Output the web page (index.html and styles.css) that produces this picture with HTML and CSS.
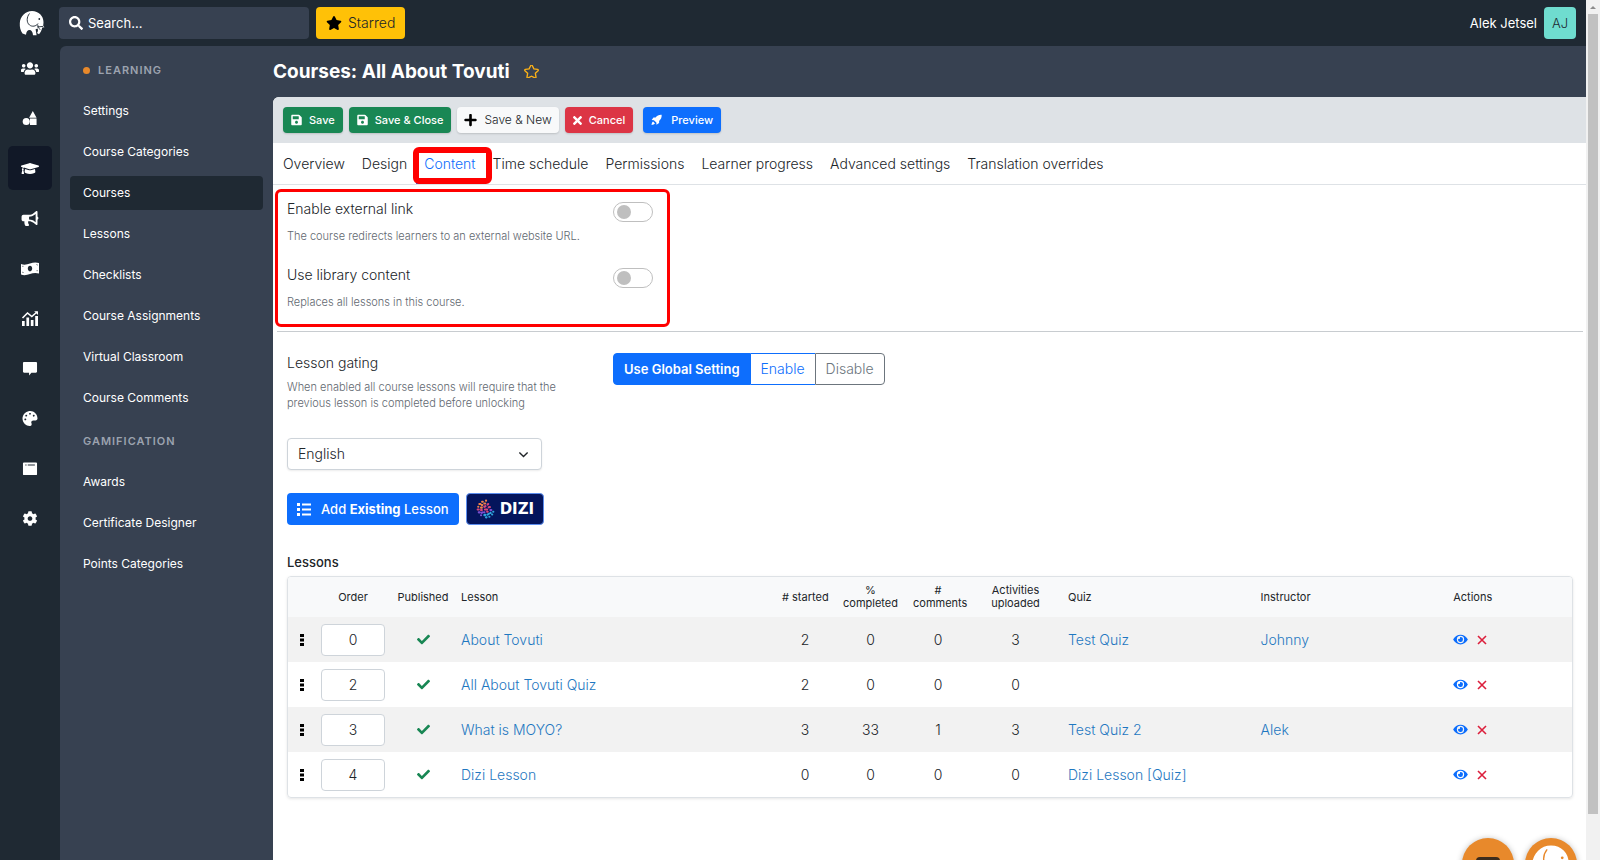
FILE: index.html
```html
<!DOCTYPE html>
<html lang="en">
<head>
  <meta charset="UTF-8" />
  <meta name="viewport" content="width=device-width, initial-scale=1.0"/>
  <title>Courses: All About Tovuti</title>
  <link rel="stylesheet" href="styles.css">
</head>
<body>
  <!-- Icon sprite -->
  <svg class="sprite" aria-hidden="true">
    <symbol id="star" viewBox="0 0 576 512"><path d="M259.3 17.8L194 150.2 47.9 171.5c-26.2 3.8-36.7 36.1-17.7 54.6l105.7 103-25 145.5c-4.5 26.3 23.2 46 46.4 33.7L288 439.6l130.7 68.7c23.2 12.2 50.9-7.4 46.4-33.7l-25-145.5 105.7-103c19-18.5 8.5-50.8-17.7-54.6L382 150.2 316.7 17.8c-11.7-23.6-45.6-23.9-57.4 0z"/></symbol>
    <symbol id="search" viewBox="0 0 512 512"><path d="M505 442.7L405.3 343c-4.5-4.5-10.6-7-17-7H372c27.6-35.3 44-79.7 44-128C416 93.1 322.9 0 208 0S0 93.1 0 208s93.1 208 208 208c48.3 0 92.7-16.4 128-44v16.3c0 6.4 2.5 12.5 7 17l99.7 99.7c9.4 9.4 24.6 9.4 33.9 0l28.3-28.3c9.4-9.4 9.4-24.6.1-34zM208 336c-70.7 0-128-57.2-128-128 0-70.7 57.2-128 128-128 70.7 0 128 57.2 128 128 0 70.7-57.2 128-128 128z"/></symbol>
    <symbol id="save" viewBox="0 0 448 512"><path d="M433.941 129.941l-83.882-83.882A48 48 0 0 0 316.118 32H48C21.49 32 0 53.49 0 80v352c0 26.51 21.49 48 48 48h352c26.51 0 48-21.49 48-48V163.882a48 48 0 0 0-14.059-33.941zM224 416c-35.346 0-64-28.654-64-64 0-35.346 28.654-64 64-64s64 28.654 64 64c0 35.346-28.654 64-64 64zm96-304.52V212c0 6.627-5.373 12-12 12H76c-6.627 0-12-5.373-12-12V108c0-6.627 5.373-12 12-12h228.52c3.183 0 6.235 1.264 8.485 3.515l3.48 3.48A11.996 11.996 0 0 1 320 111.48z"/></symbol>
    <symbol id="plus" viewBox="0 0 448 512"><path d="M416 208H272V64c0-17.67-14.33-32-32-32h-32c-17.67 0-32 14.33-32 32v144H32c-17.67 0-32 14.33-32 32v32c0 17.67 14.33 32 32 32h144v144c0 17.67 14.33 32 32 32h32c17.67 0 32-14.33 32-32V304h144c17.67 0 32-14.33 32-32v-32c0-17.67-14.33-32-32-32z"/></symbol>
    <symbol id="times" viewBox="0 0 352 512"><path d="M242.72 256l100.07-100.07c12.28-12.28 12.28-32.19 0-44.48l-22.24-22.24c-12.28-12.28-32.19-12.28-44.48 0L176 189.28 75.93 89.21c-12.28-12.28-32.19-12.28-44.48 0L9.21 111.45c-12.28 12.28-12.28 32.19 0 44.48L109.28 256 9.21 356.07c-12.28 12.28-12.28 32.19 0 44.48l22.24 22.24c12.28 12.28 32.2 12.28 44.48 0L176 322.72l100.07 100.07c12.28 12.28 32.2 12.28 44.48 0l22.24-22.24c12.28-12.28 12.28-32.19 0-44.48L242.72 256z"/></symbol>
    <symbol id="rocket" viewBox="0 0 16 16"><path d="M15.500.5C11.800.2 9 1.400 6.700 4.200H3.600L1 8l3.200.2 3.600 3.600.2 3.200 3.800-2.600V9.300C14.600 7 15.800 4.200 15.500.5zM3 10.200C1.600 11.200 1 13 .8 15.200 3 15 4.800 14.400 5.800 13z"/></symbol>
    <symbol id="check" viewBox="0 0 512 512"><path d="M173.898 439.404l-166.4-166.4c-9.997-9.997-9.997-26.206 0-36.204l36.203-36.204c9.997-9.998 26.207-9.998 36.204 0L192 312.69 432.095 72.596c9.997-9.997 26.207-9.997 36.204 0l36.203 36.204c9.997 9.997 9.997 26.206 0 36.204l-294.4 294.401c-9.998 9.997-26.207 9.997-36.204-.001z"/></symbol>
    <symbol id="eye" viewBox="0 0 576 512"><path d="M572.52 241.4C518.29 135.59 410.93 64 288 64S57.68 135.64 3.48 241.41a32.35 32.35 0 0 0 0 29.19C57.71 376.41 165.07 448 288 448s230.32-71.64 284.52-177.41a32.35 32.35 0 0 0 0-29.19zM288 400a144 144 0 1 1 144-144 143.93 143.93 0 0 1-144 144zm0-240a95.31 95.31 0 0 0-25.31 3.79 47.85 47.85 0 0 1-66.9 66.9A95.78 95.78 0 1 0 288 160z"/></symbol>
    <symbol id="cross" viewBox="0 0 10 10"><path d="M1 1l8 8M9 1L1 9" fill="none" stroke="currentColor" stroke-width="1.600"/></symbol>
    <symbol id="dots" viewBox="0 0 4 12"><path d="M0 0h4v3H0zM0 4.500h4v3H0zM0 9h4v3H0z"/></symbol>
    <symbol id="list" viewBox="0 0 15 13"><path d="M0 0h3v3H0zM0 5h3v3H0zM0 10h3v3H0zM5 .5h9v2H5zM5 5.500h9v2H5zM5 10.500h9v2H5z"/></symbol>
    <symbol id="users" viewBox="0 0 640 512"><path d="M96 224c35.3 0 64-28.7 64-64s-28.7-64-64-64-64 28.7-64 64 28.7 64 64 64zm448 0c35.3 0 64-28.7 64-64s-28.7-64-64-64-64 28.7-64 64 28.7 64 64 64zm32 32h-64c-17.6 0-33.5 7.1-45.1 18.6 40.3 22.1 68.9 62 75.1 109.4h66c17.7 0 32-14.3 32-32v-32c0-35.3-28.7-64-64-64zm-256 0c61.9 0 112-50.1 112-112S381.9 32 320 32 208 82.1 208 144s50.1 112 112 112zm76.8 32h-8.3c-20.8 10-43.9 16-68.5 16s-47.6-6-68.5-16h-8.3C179.6 288 128 339.6 128 403.2V432c0 26.5 21.5 48 48 48h288c26.5 0 48-21.5 48-48v-28.8c0-63.6-51.6-115.2-115.2-115.2zm-223.7-13.4C161.5 263.1 145.6 256 128 256H64c-35.3 0-64 28.7-64 64v32c0 17.7 14.3 32 32 32h65.9c6.3-47.4 34.9-87.3 75.2-109.4z"/></symbol>
    <symbol id="shapes" viewBox="0 0 16 16"><path d="M11 0L15 7.300H7zM8 8h7v7H8z"/><circle cx="4" cy="11.200" r="3.800"/></symbol>
    <symbol id="cap" viewBox="0 0 640 512"><path d="M622.34 153.2L343.4 67.5c-15.2-4.67-31.6-4.67-46.79 0L17.66 153.2c-23.54 7.23-23.54 38.36 0 45.59l48.63 14.94c-10.67 13.19-17.23 29.28-17.88 46.9C38.78 266.15 32 276.11 32 288c0 10.78 5.68 19.85 13.86 25.65L20.33 428.53C18.11 438.52 25.71 448 35.94 448h56.11c10.24 0 17.84-9.48 15.62-19.47L82.14 313.65C90.32 307.85 96 298.78 96 288c0-11.57-6.47-21.25-15.66-26.87.76-15.02 8.44-28.3 20.69-36.72L296.6 284.5c9.06 2.78 26.44 6.25 46.79 0l278.95-85.7c23.55-7.24 23.55-38.36 0-45.6zM352.79 315.09c-28.53 8.76-52.84 3.92-65.59 0l-145.02-44.55L128 384c0 35.35 85.96 64 192 64s192-28.65 192-64l-14.18-113.47-145.03 44.56z"/></symbol>
    <symbol id="horn" viewBox="0 0 576 512"><path d="M576 240c0-23.63-12.95-44.04-32-55.12V32.01C544 23.26 537.02 0 512 0c-7.12 0-14.19 2.38-19.98 7.02l-85.03 68.03C364.28 109.19 310.66 128 256 128H64c-35.35 0-64 28.65-64 64v96c0 35.35 28.65 64 64 64h33.7c-1.39 10.48-2.18 21.14-2.18 32 0 39.77 9.26 77.35 25.56 110.94 5.19 10.69 16.52 17.06 28.4 17.06h74.28c26.05 0 41.69-29.84 25.9-50.56-16.4-21.52-26.15-48.36-26.15-77.44 0-11.11 1.62-21.79 4.41-32H256c54.66 0 108.28 18.81 150.98 52.95l85.03 68.03a32.023 32.023 0 0 0 19.98 7.02c24.92 0 32-22.78 32-32V295.13C563.05 284.04 576 263.63 576 240zm-96 141.42l-33.05-26.44C392.95 311.78 325.12 288 256 288v-96c69.12 0 136.95-23.78 190.95-66.98L480 98.58v282.84z"/></symbol>
    <symbol id="cash" viewBox="0 0 18 14"><path fill-rule="evenodd" d="M0 2.500c3 1.200 6 .6 9-.5s6-1.600 9-.4v10.500c-3-1.200-6-.7-9 .4s-6 1.700-9 .5zM9 4.200c-1.300 0-2.200 1.300-2.200 2.900S7.700 9.900 9 9.900s2.200-1.200 2.200-2.800S10.300 4.200 9 4.200zM1.500 4.300v1.200l1.300-1zM1.500 11.300l1.400.1-1.400-1.500zM16.500 3l-1.400-.2 1.400 1.500zM16.500 9.800v-1.200l-1.300 1z"/></symbol>
    <symbol id="chart" viewBox="0 0 16 15"><path d="M0 10h2.700v5H0zM4.400 6.500h2.700V15H4.400zM8.800 9h2.700v6H8.800zM13.200 5H16v10h-2.800z"/><path d="M.5 7L5.500 2l4.300 3.500L15 1" fill="none" stroke="currentColor" stroke-width="1.600"/><path d="M12.200.2H16V4z"/></symbol>
    <symbol id="comment" viewBox="0 0 16 16"><path d="M1.700 1h12.600c.7 0 1.200.5 1.200 1.200v9c0 .7-.5 1.200-1.200 1.200H9.500L7 15.500v-3.100H1.700C1 12.400.5 11.900.5 11.200v-9C.5 1.500 1 1 1.700 1z"/></symbol>
    <symbol id="palette" viewBox="0 0 512 512"><path d="M204.3 5C104.9 24.4 24.8 104.3 5.2 203.4c-37 187 131.7 326.4 258.8 306.7 41.2-6.4 61.4-54.6 42.5-91.7-23.1-45.4 9.9-98.4 60.9-98.4h79.7c35.8 0 64.8-29.6 64.9-65.3C511.5 97.1 368.1-26.9 204.3 5zM96 320c-17.7 0-32-14.3-32-32s14.3-32 32-32 32 14.3 32 32-14.3 32-32 32zm32-128c-17.7 0-32-14.3-32-32s14.3-32 32-32 32 14.3 32 32-14.3 32-32 32zm128-64c-17.7 0-32-14.3-32-32s14.3-32 32-32 32 14.3 32 32-14.3 32-32 32zm128 64c-17.7 0-32-14.3-32-32s14.3-32 32-32 32 14.3 32 32-14.3 32-32 32z"/></symbol>
    <symbol id="window" viewBox="0 0 16 16"><path fill-rule="evenodd" d="M1.500 1.500h13c.6 0 1 .4 1 1v11.500c0 .6-.4 1-1 1h-13c-.6 0-1-.4-1-1V2.500c0-.6.4-1 1-1zM3 3.600v1.300h1.300V3.600zM5.600 3.600v1.300h7.600V3.600z"/></symbol>
    <symbol id="gear" viewBox="0 0 512 512"><path d="M487.4 315.7l-42.6-24.6c4.3-23.2 4.3-47 0-70.2l42.6-24.6c4.9-2.8 7.1-8.6 5.5-14-11.1-35.6-30-67.8-54.7-94.6-3.8-4.1-10-5.1-14.8-2.3L380.8 110c-17.9-15.4-38.5-27.3-60.8-35.1V25.8c0-5.6-3.9-10.5-9.4-11.7-36.7-8.2-74.3-7.8-109.2 0-5.500 1.200-9.400 6.100-9.400 11.700V75c-22.2 7.9-42.8 19.8-60.8 35.1L88.7 85.500c-4.900-2.800-11-1.900-14.800 2.300-24.700 26.700-43.600 58.900-54.700 94.600-1.700 5.400.6 11.200 5.500 14L67.3 221c-4.3 23.2-4.3 47 0 70.2l-42.6 24.600c-4.900 2.800-7.100 8.600-5.500 14 11.100 35.600 30 67.800 54.700 94.600 3.800 4.100 10 5.100 14.800 2.300l42.600-24.600c17.9 15.400 38.500 27.300 60.800 35.100v49.200c0 5.600 3.900 10.500 9.400 11.700 36.700 8.200 74.300 7.800 109.200 0 5.500-1.200 9.400-6.100 9.400-11.700v-49.200c22.200-7.900 42.800-19.800 60.800-35.100l42.600 24.600c4.900 2.800 11 1.900 14.800-2.300 24.700-26.700 43.600-58.900 54.700-94.600 1.500-5.500-.7-11.300-5.600-14.100zM256 336c-44.1 0-80-35.9-80-80s35.9-80 80-80 80 35.9 80 80-35.9 80-80 80z"/></symbol>
    <symbol id="elephant" viewBox="0 0 26 26"><path fill="#fff" d="M3.500 23.500C1.500 20.500.5 17 .8 13 1.300 6 6.500 1 13 1c6.700 0 11.500 5 11.500 11.200 0 1.600-.3 2.800-.3 3.800l1.300 1.300-2.200.3c-.6 3-2 5.200-3.300 6.600l-2-1.200c1-1.500 1.300-3 .6-4.500l-2 .8 1 6H14c-.2-3.300-1.500-5.300-3.500-5.300S7.300 21.500 7 24.800z"/><path fill="none" stroke="currentColor" stroke-width=".9" d="M10.500 3.500C7.600 7 7.300 12.500 10.500 15c2.600 2 6.500 1.500 8.500-1.500M18.600 14.500c.5 2 1 3.500 2.600 5.300M18 17l6-.6"/><circle cx="20.300" cy="9" r=".9" fill="currentColor"/></symbol>
  </svg>

  <!-- Top bar -->
  <header class="topbar">
    <a class="logo" href="#" aria-label="Home"><svg><use href="#elephant"/></svg></a>
    <div class="search">
      <svg><use href="#search"/></svg>
      <input type="text" placeholder="Search..." aria-label="Search">
    </div>
    <button class="starred"><svg><use href="#star"/></svg>Starred</button>
    <div class="user">
      <span>Alek Jetsel</span>
      <div class="avatar">AJ</div>
    </div>
  </header>

  <div class="shell">
    <!-- Icon rail -->
    <nav class="rail" aria-label="Sections">
      <a href="#" aria-label="Users"><svg><use href="#users"/></svg></a>
      <a href="#" aria-label="Content"><svg><use href="#shapes"/></svg></a>
      <a href="#" aria-label="Learning" class="active"><svg><use href="#cap"/></svg></a>
      <a href="#" aria-label="Marketing"><svg><use href="#horn"/></svg></a>
      <a href="#" aria-label="Commerce"><svg><use href="#cash"/></svg></a>
      <a href="#" aria-label="Reports"><svg><use href="#chart"/></svg></a>
      <a href="#" aria-label="Messages"><svg><use href="#comment"/></svg></a>
      <a href="#" aria-label="Design"><svg><use href="#palette"/></svg></a>
      <a href="#" aria-label="Pages"><svg><use href="#window"/></svg></a>
      <a href="#" aria-label="Configuration"><svg><use href="#gear"/></svg></a>
    </nav>

    <!-- Side menu -->
    <nav class="menu" aria-label="Learning">
      <div class="menu-title dot">LEARNING</div>
      <a href="#">Settings</a>
      <a href="#">Course Categories</a>
      <a href="#" class="active">Courses</a>
      <a href="#">Lessons</a>
      <a href="#">Checklists</a>
      <a href="#">Course Assignments</a>
      <a href="#">Virtual Classroom</a>
      <a href="#">Course Comments</a>
      <div class="menu-title">GAMIFICATION</div>
      <a href="#">Awards</a>
      <a href="#">Certificate Designer</a>
      <a href="#">Points Categories</a>
    </nav>

    <!-- Page -->
    <main class="page">
      <h1 class="page-title">Courses: All About Tovuti <svg><use href="#star"/></svg></h1>

      <div class="card">
        <div class="toolbar">
          <button class="btn btn-success"><svg><use href="#save"/></svg>Save</button>
          <button class="btn btn-success"><svg><use href="#save"/></svg>Save &amp; Close</button>
          <button class="btn btn-light"><svg><use href="#plus"/></svg>Save &amp; New</button>
          <button class="btn btn-danger"><svg><use href="#times"/></svg>Cancel</button>
          <button class="btn btn-primary"><svg><use href="#rocket"/></svg>Preview</button>
        </div>

        <nav class="tabs" aria-label="Course">
          <a href="#">Overview</a>
          <a href="#">Design</a>
          <a href="#" class="active">Content<span class="tab-mark"></span></a>
          <a href="#">Time schedule</a>
          <a href="#">Permissions</a>
          <a href="#">Learner progress</a>
          <a href="#">Advanced settings</a>
          <a href="#">Translation overrides</a>
        </nav>

        <section class="options">
          <div class="option">
            <div>
              <label for="external">Enable external link</label>
              <p>The course redirects learners to an external website URL.</p>
            </div>
            <input class="switch" type="checkbox" id="external">
          </div>
          <div class="option">
            <div>
              <label for="library">Use library content</label>
              <p>Replaces all lessons in this course.</p>
            </div>
            <input class="switch" type="checkbox" id="library">
          </div>
        </section>

        <section class="content">
          <div class="gating">
            <div class="gating-text">
              <h2>Lesson gating</h2>
              <p>When enabled all course lessons will require that the previous lesson is completed before unlocking</p>
            </div>
            <div class="btn-group">
              <button class="on">Use Global Setting</button>
              <button class="enable">Enable</button>
              <button class="disable">Disable</button>
            </div>
          </div>

          <select class="language" aria-label="Language">
            <option>English</option>
          </select>

          <div class="lesson-actions">
            <button class="add"><svg><use href="#list"/></svg><span>Add <b>Existing</b> Lesson</span></button>
            <button class="dizi">
              <svg viewBox="0 0 18 18" fill="none" stroke-linecap="round" stroke-width="1.900">
                <path stroke="#f0824a" d="M2 7h.1M3 4.500h1M5.500 2.500h.6M5.200 5.500h.5M7.500 4h.8M9 1.500h.1M4.500 7.800h.8"/>
                <path stroke="#d8467c" d="M7.500 7l1-.5M8 9.500h2M1.500 9.500h1M10.500 5l.5-.5M4.500 10h.8M11.500 7.500l1-.3M10 11.500h.5"/>
                <path stroke="#7a4fd0" d="M2.500 12h.8M5 12.500l1-.4M13 10h.8M7.500 12h.1M4.500 14.600h.1"/>
                <path stroke="#2fa4dc" d="M7.500 14.500l1-.2M10.500 14l1-.6M13 12.500h.1M9 16.500h.5M12 16h.1M14.500 14h.1M15.500 11.500h.1"/>
              </svg>
              DIZI
            </button>
          </div>

          <h2 class="lessons-title" id="lessons-title">Lessons</h2>
          <div class="table-box">
            <table aria-labelledby="lessons-title">
              <thead>
                <tr>
                  <th class="col-handle"></th>
                  <th class="col-order">Order</th>
                  <th class="col-pub">Published</th>
                  <th class="col-lesson">Lesson</th>
                  <th class="col-started"># started</th>
                  <th class="col-done">%<br>completed</th>
                  <th class="col-comments">#<br>comments</th>
                  <th class="col-act">Activities<br>uploaded</th>
                  <th class="col-link">Quiz</th>
                  <th class="col-link">Instructor</th>
                  <th class="col-actions">Actions</th>
                </tr>
              </thead>
              <tbody>
                <tr>
                  <td><svg class="i-dots"><use href="#dots"/></svg></td>
                  <td><input type="text" value="0" aria-label="Order"></td>
                  <td><svg class="i-check"><use href="#check"/></svg></td>
                  <td class="left"><a href="#">About Tovuti</a></td>
                  <td>2</td><td>0</td><td>0</td><td>3</td>
                  <td class="left"><a href="#">Test Quiz</a></td>
                  <td class="left"><a href="#">Johnny</a></td>
                  <td class="left"><div class="row-actions"><button aria-label="View"><svg class="i-eye"><use href="#eye"/></svg></button><button aria-label="Remove"><svg class="i-cross"><use href="#cross"/></svg></button></div></td>
                </tr>
                <tr>
                  <td><svg class="i-dots"><use href="#dots"/></svg></td>
                  <td><input type="text" value="2" aria-label="Order"></td>
                  <td><svg class="i-check"><use href="#check"/></svg></td>
                  <td class="left"><a href="#">All About Tovuti Quiz</a></td>
                  <td>2</td><td>0</td><td>0</td><td>0</td>
                  <td class="left"></td>
                  <td class="left"></td>
                  <td class="left"><div class="row-actions"><button aria-label="View"><svg class="i-eye"><use href="#eye"/></svg></button><button aria-label="Remove"><svg class="i-cross"><use href="#cross"/></svg></button></div></td>
                </tr>
                <tr>
                  <td><svg class="i-dots"><use href="#dots"/></svg></td>
                  <td><input type="text" value="3" aria-label="Order"></td>
                  <td><svg class="i-check"><use href="#check"/></svg></td>
                  <td class="left"><a href="#">What is MOYO?</a></td>
                  <td>3</td><td>33</td><td>1</td><td>3</td>
                  <td class="left"><a href="#">Test Quiz 2</a></td>
                  <td class="left"><a href="#">Alek</a></td>
                  <td class="left"><div class="row-actions"><button aria-label="View"><svg class="i-eye"><use href="#eye"/></svg></button><button aria-label="Remove"><svg class="i-cross"><use href="#cross"/></svg></button></div></td>
                </tr>
                <tr>
                  <td><svg class="i-dots"><use href="#dots"/></svg></td>
                  <td><input type="text" value="4" aria-label="Order"></td>
                  <td><svg class="i-check"><use href="#check"/></svg></td>
                  <td class="left"><a href="#">Dizi Lesson</a></td>
                  <td>0</td><td>0</td><td>0</td><td>0</td>
                  <td class="left"><a href="#">Dizi Lesson [Quiz]</a></td>
                  <td class="left"></td>
                  <td class="left"><div class="row-actions"><button aria-label="View"><svg class="i-eye"><use href="#eye"/></svg></button><button aria-label="Remove"><svg class="i-cross"><use href="#cross"/></svg></button></div></td>
                </tr>
              </tbody>
            </table>
          </div>
        </section>
      </div>
    </main>
  </div>

  <!-- Floating help buttons -->
  <div class="floating">
    <button class="chat" aria-label="Chat"><svg viewBox="0 0 24 14"><rect width="24" height="20" rx="4" fill="#3d2c1c"/></svg></button>
    <button class="help" aria-label="Help"><svg><use href="#elephant"/></svg></button>
  </div>

  <!-- Scrollbar -->
  <div class="scrollbar"><div class="scroll-up"></div><div class="scroll-thumb"></div></div>
</body>
</html>
```

FILE: styles.css
```css
* {
  box-sizing: border-box;
}

body {
  margin: 0;
  padding-right: 14px;
  min-height: 100vh;
  display: flex;
  flex-direction: column;
  font-family: Inter, "Liberation Sans", sans-serif;
  font-size: 14px;
  font-weight: 300;
  line-height: 20px;
  color: #212529;
  background: #1f2933;
}

a {
  text-decoration: none;
}

button,
input,
select {
  font: inherit;
}

button {
  cursor: pointer;
}

svg {
  display: block;
  flex: none;
  fill: currentColor;
}

h1,
h2,
p {
  margin: 0;
}

.sprite {
  position: absolute;
  width: 0;
  height: 0;
}

/* Top bar */
.topbar {
  height: 46px;
  padding: 0 10px 0 19px;
  display: flex;
  align-items: center;
  color: #fff;
}

.logo {
  color: #1f2933;
  margin-right: 14px;
}

.logo svg {
  width: 26px;
  height: 26px;
}

.search {
  display: flex;
  align-items: center;
  gap: 5px;
  width: 250px;
  height: 32px;
  padding: 0 10px;
  border-radius: 4px;
  background: #374151;
}

.search svg {
  width: 14px;
  height: 14px;
}

.search input {
  flex: 1;
  min-width: 0;
  padding: 0;
  border: 0;
  outline: 0;
  font-size: 13px;
  font-weight: 400;
  color: #fff;
  background: none;
}

.search input::placeholder {
  color: #fff;
}

.starred {
  display: flex;
  align-items: center;
  gap: 6px;
  height: 32px;
  margin-left: 7px;
  padding: 0 10px;
  border: 0;
  border-radius: 4px;
  color: #212529;
  background: #ffc107;
}

.starred svg {
  width: 16px;
  height: 14px;
  color: #000;
}

.user {
  display: flex;
  align-items: center;
  gap: 7px;
  margin-left: auto;
  font-size: 13px;
  font-weight: 400;
}

.avatar {
  width: 32px;
  height: 32px;
  border-radius: 4px;
  font-weight: 300;
  line-height: 32px;
  text-align: center;
  color: #1f2933;
  background: #6fdccf;
}

/* Navigation */
.shell {
  flex: 1;
  display: flex;
}

.rail {
  flex: none;
  width: 60px;
  display: flex;
  flex-direction: column;
  align-items: center;
  gap: 6px;
}

.rail a {
  width: 44px;
  height: 44px;
  display: flex;
  align-items: center;
  justify-content: center;
  border-radius: 5px;
  color: #fff;
}

.rail a.active {
  background: #111827;
}

.rail svg {
  width: 18px;
  height: 15px;
}

.menu {
  flex: none;
  width: 213px;
  padding: 7px 10px;
  border-radius: 6px 0 0 0;
  font-size: 12px;
  background: #374151;
}

.menu a {
  display: block;
  height: 34px;
  margin-bottom: 7px;
  padding: 0 13px;
  border-radius: 4px;
  line-height: 34px;
  font-weight: 400;
  color: #fff;
}

.menu a.active {
  background: #1f2933;
}

.menu-title {
  display: flex;
  align-items: center;
  gap: 8px;
  height: 34px;
  margin-bottom: 7px;
  padding: 0 13px;
  font-size: 11px;
  font-weight: 600;
  letter-spacing: 1px;
  color: #9ca3af;
}

.menu a + .menu-title {
  margin-top: 9px;
}

.menu-title.dot::before {
  content: '';
  width: 7px;
  height: 7px;
  border-radius: 50%;
  background: #e8892b;
}

/* Page */
.page {
  flex: 1;
  min-width: 0;
  display: flex;
  flex-direction: column;
  background: #374151;
}

.page-title {
  display: flex;
  align-items: center;
  gap: 14px;
  height: 51px;
  font-size: 19px;
  font-weight: 700;
  color: #fff;
}

.page-title svg {
  width: 15px;
  height: 13px;
  overflow: visible;
  fill: none;
  stroke: #fbb117;
  stroke-width: 54;
}

.card {
  flex: 1;
  border-radius: 6px 0 0 0;
  overflow: hidden;
  background: #fff;
}

.toolbar {
  display: flex;
  align-items: center;
  gap: 6px;
  height: 46px;
  padding: 0 10px;
  background: #dee2e6;
}

.btn {
  display: flex;
  align-items: center;
  gap: 7px;
  height: 26px;
  padding: 0 8px;
  border: 0;
  border-radius: 4px;
  font-size: 11px;
  font-weight: 500;
  color: #fff;
  box-shadow: 0 1px 2px rgba(0, 0, 0, 0.15);
}

.btn svg {
  width: 11px;
  height: 12px;
}

.btn-success {
  background: #198754;
}

.btn-light {
  padding: 0 7px;
  font-size: 12px;
  font-weight: 300;
  color: #212529;
  background: #f8f9fa;
}

.btn-light svg {
  width: 13px;
  height: 14px;
  color: #000;
}

.btn-danger {
  background: #dc3545;
}

.btn-danger svg {
  width: 9px;
  height: 13px;
}

.btn-primary {
  gap: 9px;
  margin-left: 4px;
  background: #0d6efd;
}

.tabs {
  display: flex;
  gap: 1px;
  height: 42px;
  padding-left: 2px;
  border-bottom: 1px solid #dee2e6;
}

.tabs a {
  position: relative;
  padding: 0 8px;
  line-height: 42px;
  color: #212529;
}

.tabs a.active {
  color: #0d6efd;
  border-bottom: 2px solid #0d6efd;
}

.tab-mark {
  position: absolute;
  top: 4px;
  left: -3px;
  right: -8px;
  height: 37px;
  border: 6px solid #f00;
  border-radius: 6px;
}

.options {
  width: 395px;
  margin: 4px 0 4px 2px;
  padding: 7px 14px 0 9px;
  border: 3px solid #f00;
  border-radius: 6px;
}

.option {
  display: flex;
  justify-content: space-between;
  height: 66px;
}

.option p {
  margin-top: 9px;
}

.option:last-child {
  height: 59px;
}

.option p,
.gating p {
  font-size: 11px;
  line-height: 16px;
  color: #5f6870;
}

.switch {
  appearance: none;
  width: 40px;
  height: 20px;
  margin: 3px 0 0;
  padding: 2px 3px;
  border: 1px solid #bfbfbf;
  border-radius: 10px;
  background: #fff;
}

.switch::before {
  content: '';
  display: block;
  width: 14px;
  height: 14px;
  border-radius: 50%;
  background: #bfbfbf;
}

.switch:checked::before {
  margin-left: auto;
  background: #0d6efd;
}

.content {
  margin: 0 3px 0 4px;
  padding: 21px 10px 30px;
  border-top: 1px solid #c8ccd0;
}

.gating {
  display: flex;
}

.gating-text {
  width: 326px;
  padding-right: 40px;
}

h2 {
  font-size: 14px;
  font-weight: 300;
  line-height: 20px;
}

.gating p {
  margin-top: 6px;
}

.btn-group {
  display: flex;
  height: 32px;
}

.btn-group button {
  padding: 0 10px;
  border: 1px solid #0d6efd;
  background: #fff;
}

.btn-group .on {
  border-radius: 4px 0 0 4px;
  font-size: 13px;
  font-weight: 600;
  color: #fff;
  background: #0d6efd;
}

.btn-group .enable {
  border-width: 1px 0;
  color: #0d6efd;
}

.btn-group .disable {
  border-color: #6c757d;
  border-radius: 0 4px 4px 0;
  color: #6c757d;
}

.language {
  display: block;
  appearance: none;
  width: 255px;
  height: 32px;
  margin-top: 27px;
  padding: 0 10px;
  border: 1px solid #ced4da;
  border-radius: 4px;
  color: #212529;
  background: #fff url("data:image/svg+xml,%3Csvg xmlns='http://www.w3.org/2000/svg' viewBox='0 0 16 16'%3E%3Cpath fill='none' stroke='%23212529' stroke-width='2' d='M2 5l6 6 6-6'/%3E%3C/svg%3E") no-repeat right 12px center / 11px;
  box-shadow: 0 1px 2px rgba(0, 0, 0, 0.08);
}

.lesson-actions {
  display: flex;
  gap: 7px;
  margin-top: 23px;
}

.add,
.dizi {
  display: flex;
  align-items: center;
  height: 32px;
  border: 0;
  border-radius: 4px;
  color: #fff;
}

.add {
  gap: 9px;
  padding: 0 10px;
  font-size: 13px;
  font-weight: 500;
  background: #0d6efd;
}

.add b {
  font-weight: 700;
}

.add svg {
  width: 15px;
  height: 13px;
}

.dizi {
  gap: 4px;
  padding: 0 9px;
  border: 1px solid #5b8def;
  font-family: "DejaVu Sans", sans-serif;
  font-size: 15px;
  font-weight: 700;
  background: #04155c;
}

.dizi svg {
  width: 20px;
  height: 20px;
}

.lessons-title {
  margin: 27px 0 4px;
  font-size: 13px;
  font-weight: 500;
}

.table-box {
  border: 1px solid #dee2e6;
  border-radius: 4px;
  overflow: hidden;
  box-shadow: 0 1px 3px rgba(0, 0, 0, 0.1);
}

table {
  width: 100%;
  border-collapse: collapse;
  table-layout: fixed;
}

th {
  height: 40px;
  padding: 0 6px;
  font-size: 11px;
  font-weight: 400;
  line-height: 13px;
  white-space: nowrap;
  background: #f8f9fa;
}

td {
  height: 45px;
  padding: 0 6px;
  text-align: center;
}

tbody tr:nth-child(odd) {
  background: #f2f2f2;
}

td svg {
  margin: 0 auto;
}

td.left,
.col-lesson,
.col-link,
.col-actions {
  text-align: left;
}

td a {
  color: #1f78c1;
}

td input {
  display: block;
  width: 64px;
  height: 32px;
  padding: 0;
  border: 1px solid #ced4da;
  border-radius: 4px;
  text-align: center;
  color: #212529;
  background: #fff;
}

.col-handle {
  width: 27px;
}

.col-order {
  width: 76px;
}

.col-pub {
  width: 64px;
}

.col-lesson {
  width: 25%;
}

.col-started {
  width: 58px;
}

.col-done {
  width: 73px;
}

.col-comments {
  width: 62px;
}

.col-act {
  width: 93px;
}

.col-link {
  width: 15%;
}

.i-dots {
  width: 4px;
  height: 12px;
  color: #000;
}

.i-check {
  width: 13px;
  height: 13px;
  color: #198754;
}

.i-eye {
  width: 15px;
  height: 13px;
  color: #0d6efd;
}

.i-cross {
  width: 10px;
  height: 10px;
  color: #dc1f3c;
}

.row-actions {
  display: flex;
  align-items: center;
  gap: 9px;
}

.row-actions button {
  padding: 0;
  border: 0;
  background: none;
}

/* Floating help buttons */
.floating {
  position: fixed;
  right: 23px;
  bottom: -30px;
  display: flex;
  gap: 11px;
}

.floating button {
  width: 52px;
  height: 52px;
  padding: 0;
  display: flex;
  align-items: center;
  justify-content: center;
  border: 0;
  border-radius: 50%;
  color: #e8892b;
  background: #e8892b;
  box-shadow: 0 1px 6px rgba(0, 0, 0, 0.3);
}

.chat svg {
  width: 24px;
  height: 14px;
}

.help svg {
  width: 40px;
  height: 40px;
}

/* Scrollbar */
.scrollbar {
  position: fixed;
  top: 0;
  right: 0;
  bottom: 0;
  width: 14px;
  padding: 0 2px;
  background: #f1f1f1;
}

.scroll-up {
  height: 14px;
  display: flex;
  align-items: center;
  justify-content: center;
}

.scroll-up::before {
  content: '';
  border: 3px solid transparent;
  border-top: 0;
  border-bottom-color: #8b8b8b;
}

.scroll-thumb {
  height: 93%;
  background: #c1c1c1;
}
```
